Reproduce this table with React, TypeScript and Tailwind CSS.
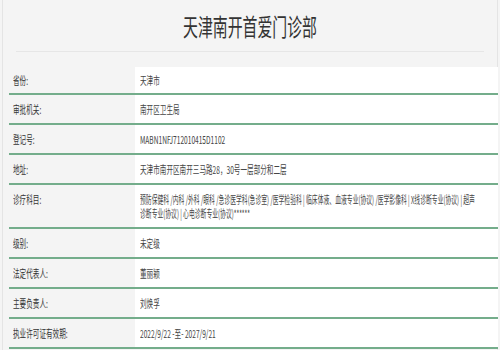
import React from 'react';

type Row = { label: string; lines: string[]; first?: boolean; tight?: boolean };

const ROWS: Row[] = [
  { label: '省份:', lines: ['天津市'], first: true },
  { label: '审批机关:', lines: ['南开区卫生局'] },
  { label: '登记号:', lines: ['MABN1NFJ712010415D1102'] },
  { label: '地址:', lines: ['天津市南开区南开三马路28，30号一层部分和二层'] },
  {
    label: '诊疗科目:',
    tight: true,
    lines: [
      '预防保健科 /内科 /外科 /眼科 /急诊医学科(急诊室) /医学检验科 | 临床体液、血液专业(协议) /医学影像科 | X线诊断专业(协议) | 超声',
      '诊断专业(协议) | 心电诊断专业(协议)******',
    ],
  },
  { label: '级别:', lines: ['未定级'] },
  { label: '法定代表人:', lines: ['董丽颖'] },
  { label: '主要负责人:', lines: ['刘焕孚'] },
  { label: '执业许可证有效期:', lines: ['2022/9/22 -至- 2027/9/21'] },
];

// the shot is squeezed sideways, so text gets a horizontal scale
const Squeezed: React.FC<{ children: React.ReactNode; tight?: boolean }> = ({ children, tight }) => (
  <span
    className={`block w-max origin-left whitespace-nowrap ${tight ? 'scale-x-[0.53]' : 'scale-x-[0.6]'}`}
  >
    {children}
  </span>
);

export default function App() {
  return (
    <div className="w-[500px] h-[350px] overflow-hidden bg-[#f4f4f4] font-['Noto_Sans_CJK_SC','Noto_Sans',sans-serif]">
      <div className="mx-[2px] h-full border-x border-[#e4e4e4]">
        {/* Title */}
        <div className="h-[51px] flex items-center justify-center">
          <span className="inline-block scale-x-[0.62] text-[24px] leading-none text-[#333]">天津南开首爱门诊部</span>
        </div>
        <div className="mx-[13px] h-px bg-[#e6e6e6]" />

        {/* Table */}
        <div className="mt-[15px] ml-[6px] mr-[-1px]">
          {ROWS.map((r) => (
            <div key={r.label} className="flex border-b-2 border-[#74ad8b] text-[11px] leading-[14px]">
              <div className={`w-[126px] shrink-0 pl-[4px] text-[#333] ${r.first ? 'py-[6px]' : 'py-[7px]'}`}>
                <Squeezed>{r.label}</Squeezed>
              </div>
              <div className={`flex-1 overflow-hidden bg-white pl-[5px] text-[#444] ${r.first ? 'py-[6px]' : 'py-[7px]'}`}>
                {r.lines.map((l, i) => (
                  <Squeezed key={i} tight={r.tight}>
                    {l}
                  </Squeezed>
                ))}
              </div>
            </div>
          ))}
        </div>
      </div>
    </div>
  );
}
